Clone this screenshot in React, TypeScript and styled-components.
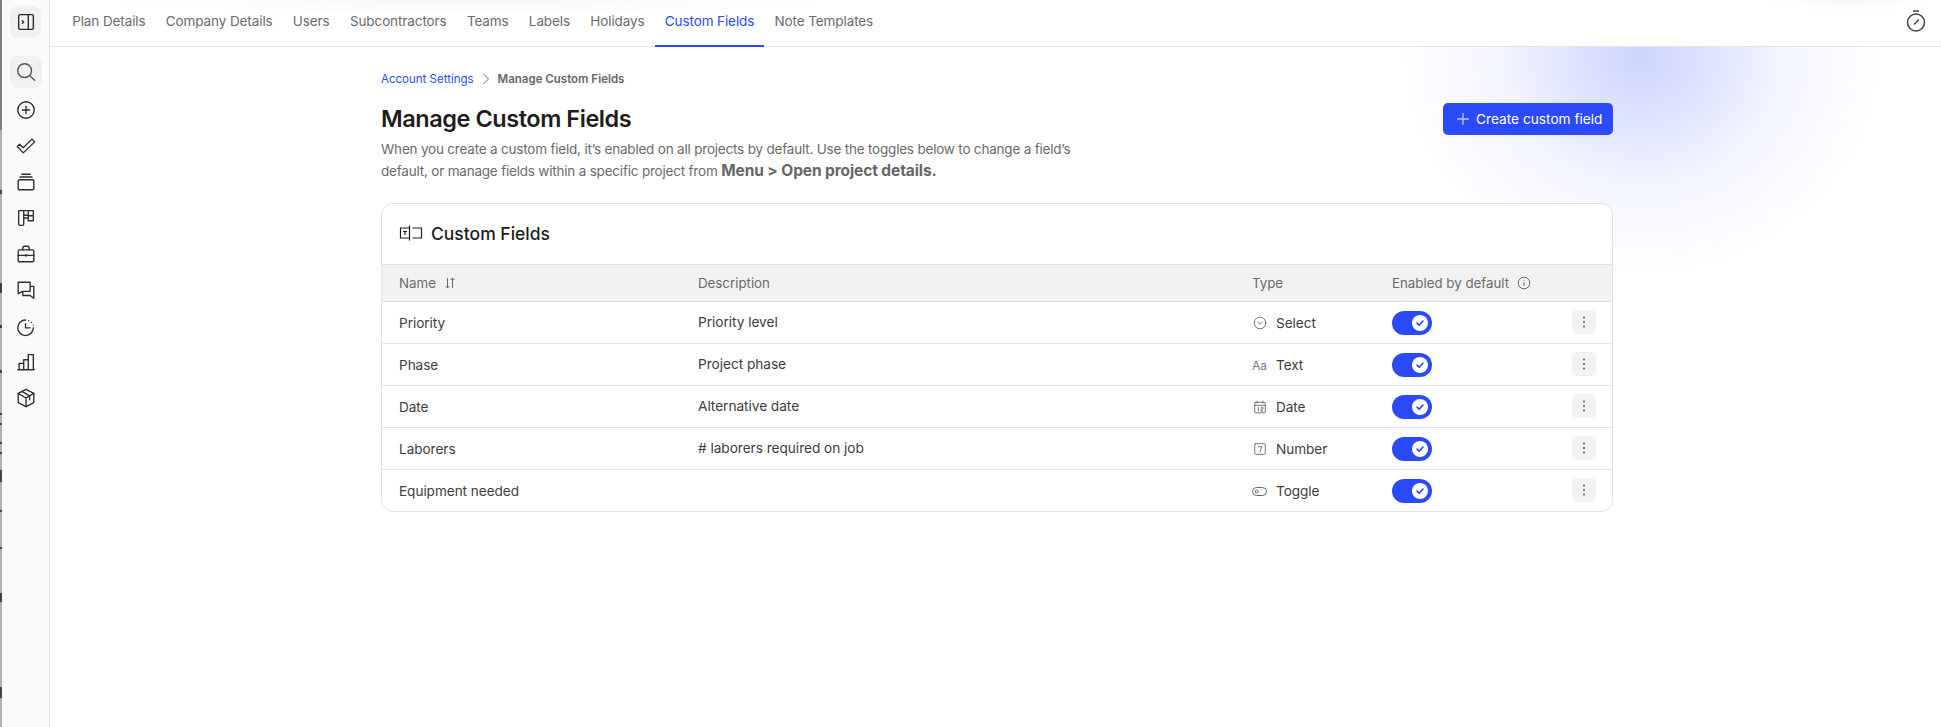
import styled, { createGlobalStyle } from "styled-components";
import { ReactNode } from "react";

const blue = "#2b4bfb";

const GlobalStyle = createGlobalStyle`
  html, body {
    margin: 0;
    height: 100%;
    background: #fff;
    font-family: Inter, "Noto Sans", "Liberation Sans", sans-serif;
  }
  #root { height: 100%; }
`;

const tabs = ["Plan Details", "Company Details", "Users", "Subcontractors", "Teams", "Labels", "Holidays", "Custom Fields", "Note Templates"];

// bits of the window behind that show along the left edge
const stripMarks: [number, number][] = [
  [190, 194], [283, 293], [325, 328], [370, 373], [413, 415], [423, 425], [442, 444], [452, 454],
  [470, 482], [510, 512], [547, 549], [593, 602], [687, 698],
];
const stripStops = stripMarks
  .map(([a, b]) => `#b0b0b0 ${a}px, #3a4450 ${a}px, #3a4450 ${b}px, #b0b0b0 ${b}px`)
  .join(", ");

const Icon = ({ size = 22, children }: { size?: number; children: ReactNode }) => (
  <svg width={size} height={size} viewBox="0 0 24 24" fill="none" stroke="currentColor" strokeWidth="1.5" strokeLinecap="round" strokeLinejoin="round">
    {children}
  </svg>
);

const navIcons: ReactNode[] = [
  <>
    <circle cx="10.5" cy="10.5" r="7.5" />
    <path d="M16 16l5.5 5" />
  </>,
  <>
    <circle cx="12" cy="12" r="9" />
    <path d="M12 8v8M8 12h8" />
  </>,
  <path d="M2.5 12.5L5 10l4 4 9.5-9.5 3 3L9 19.5z" />,
  <>
    <rect x="3.5" y="9.5" width="17" height="11" rx="1.5" />
    <path d="M5.5 6.5h13M7.5 3.5h9" />
  </>,
  <path d="M4 4h5.5v14.5a1.5 1.5 0 0 1-1.5 1.5H5.5A1.5 1.5 0 0 1 4 18.5zM9.5 12h5M14.5 4h5.5v11h-5.5zM9.5 4h5v5h-5zM14.5 9.5H20" />,
  <>
    <rect x="3.5" y="7.5" width="17" height="13" rx="1.5" />
    <path d="M8.5 7.5V5.5a2 2 0 0 1 2-2h3a2 2 0 0 1 2 2v2M3.5 13.5h17M12 12.5v2" />
  </>,
  <path d="M3.5 3.5h13v10H8l-4.5 2.5zM16.5 8h4v13l-4-3H8.5v-4.5" />,
  <>
    <path d="M20 14a8.5 8.5 0 1 1-8.5-8.5" />
    <path d="M11.5 9.5v4.5h5M15 6.2v0M18 8.2v0M19.7 11v0" />
  </>,
  <path d="M3 20.5h18M4.5 20.5v-7h5v7M9.5 20.5V9.5h5v11M14.5 20.5V4h5.5v16.5" />,
  <>
    <path d="M12 2.5l8.5 4.5v10L12 21.5 3.5 17V7z" />
    <path d="M3.5 7l8.5 5 8.5-5M12 12v9.5M7.5 4.8l8.5 4.8v4" />
  </>,
];

const rows = [
  { name: "Priority", description: "Priority level", type: "Select" },
  { name: "Phase", description: "Project phase", type: "Text" },
  { name: "Date", description: "Alternative date", type: "Date" },
  { name: "Laborers", description: "# laborers required on job", type: "Number" },
  { name: "Equipment needed", description: "", type: "Toggle" },
];

const TypeIcon = ({ type }: { type: string }) => {
  if (type === "Select")
    return (
      <Icon size={14}>
        <circle cx="12" cy="12" r="10" />
        <path d="M8 10.5l4 4 4-4" />
      </Icon>
    );
  if (type === "Text") return <AaGlyph>Aa</AaGlyph>;
  if (type === "Date")
    return (
      <Icon size={14}>
        <rect x="3" y="4" width="18" height="18" rx="1" />
        <path d="M3 9h18M7 2v3M17 2v3M9 12.5v6.5M14 12.5h3v3h-3v3.5h3" />
      </Icon>
    );
  if (type === "Number")
    return (
      <Icon size={14}>
        <rect x="3" y="3" width="18" height="18" rx="1" />
        <path d="M9 8h6l-3 9" />
      </Icon>
    );
  return (
    <svg width="15" height="9" viewBox="0 0 15 9" fill="none" stroke="currentColor" strokeWidth="1">
      <rect x="0.5" y="0.5" width="14" height="8" rx="4" />
      <rect x="3.5" y="3" width="2.5" height="3" rx="0.8" />
    </svg>
  );
};

export default () => {
  return (
    <>
      <GlobalStyle />
      <Page>
        <Strip />
        <Side>
          <SideButton>
            <Icon size={22}>
              <rect x="4" y="4" width="16" height="16" rx="1.5" />
              <path d="M14.5 4v16M8 10.5l1.5 1.5L8 13.5" />
            </Icon>
          </SideButton>
          <Nav>
            {navIcons.map((icon, i) => (
              <NavItem key={i} $active={i === 0}>
                <Icon size={22}>{icon}</Icon>
              </NavItem>
            ))}
          </Nav>
        </Side>
        <Right>
          <TopBar>
            <Tabs>
              {tabs.map((tab) => (
                <Tab key={tab} $active={tab === "Custom Fields"}>
                  {tab}
                </Tab>
              ))}
            </Tabs>
            <Timer>
              <Icon size={24}>
                <circle cx="12" cy="13.5" r="8.5" />
                <path d="M9.5 2h5M10.5 15l4-4" />
              </Icon>
            </Timer>
          </TopBar>
          <Body>
            <Glow />
            <Content>
              <Crumbs>
                <CrumbLink>Account Settings</CrumbLink>
                <svg width="10" height="12" viewBox="0 0 10 12" fill="none" stroke="#6b6b6b" strokeWidth="1">
                  <path d="M2.5 1l5 5-5 5" />
                </svg>
                <CrumbCurrent>Manage Custom Fields</CrumbCurrent>
              </Crumbs>
              <Head>
                <div>
                  <Title>Manage Custom Fields</Title>
                  <Intro>
                    When you create a custom field, it’s enabled on all projects by default. Use the toggles below to change a field’s default, or manage fields within a specific project from <strong>Menu &gt; Open project details.</strong>
                  </Intro>
                </div>
                <CreateButton>
                  <svg width="14" height="14" viewBox="0 0 14 14" stroke="#b9c5ff" strokeWidth="1.3">
                    <path d="M7 1v12M1 7h12" />
                  </svg>
                  Create custom field
                </CreateButton>
              </Head>
              <Card>
                <CardHead>
                  <svg width="24" height="16" viewBox="0 0 24 16" fill="none" stroke="#1d1d1d" strokeWidth="1.2">
                    <path d="M10.5 3H1.5v10h9M10.5 0.5v15M13.5 3h9v10h-9" />
                    <path d="M4 6.5h4M6 6.5v3.5" />
                  </svg>
                  <CardTitle>Custom Fields</CardTitle>
                </CardHead>
                <HeadRow>
                  <HeadCell>
                    Name
                    <svg width="12" height="12" viewBox="0 0 12 12" fill="none" stroke="#6b6b6b" strokeWidth="1">
                      <path d="M3.5 1v10M1.5 9l2 2 2-2M8.5 11V1M6.5 3l2-2 2 2" />
                    </svg>
                  </HeadCell>
                  <HeadCell>Description</HeadCell>
                  <HeadCell>Type</HeadCell>
                  <HeadCell>
                    Enabled by default
                    <svg width="14" height="14" viewBox="0 0 14 14" fill="none" stroke="#6b6b6b" strokeWidth="1">
                      <circle cx="7" cy="7" r="5.8" />
                      <path d="M7 6.2v3.6M7 4v.6" />
                    </svg>
                  </HeadCell>
                </HeadRow>
                {rows.map((row) => (
                  <Row key={row.name}>
                    <Cell>{row.name}</Cell>
                    <Description>{row.description}</Description>
                    <TypeCell>
                      <TypeGlyph>
                        <TypeIcon type={row.type} />
                      </TypeGlyph>
                      {row.type}
                    </TypeCell>
                    <Switch>
                      <Knob>
                        <svg width="10" height="10" viewBox="0 0 10 10" fill="none" stroke={blue} strokeWidth="1.6" strokeLinecap="round" strokeLinejoin="round">
                          <path d="M2 5.2l2.2 2L8 3" />
                        </svg>
                      </Knob>
                    </Switch>
                    <MoreButton>
                      <svg width="4" height="12" viewBox="0 0 4 12" fill="#555">
                        <circle cx="2" cy="1.5" r="1" />
                        <circle cx="2" cy="6" r="1" />
                        <circle cx="2" cy="10.5" r="1" />
                      </svg>
                    </MoreButton>
                  </Row>
                ))}
              </Card>
            </Content>
          </Body>
        </Right>
      </Page>
    </>
  );
};

const Page = styled.div`
  display: flex;
  height: 727px;
  overflow: hidden;
`;
const Strip = styled.div`
  width: 2px;
  flex-shrink: 0;
  background: linear-gradient(to bottom, #808080 0, #808080 130px, #b0b0b0 130px, ${stripStops}, #b0b0b0 727px);
`;
const Side = styled.aside`
  width: 48px;
  flex-shrink: 0;
  box-sizing: border-box;
  padding: 6px 0 0 8px;
  background: #fafafa;
  border-right: 1px solid #e4e4e4;
`;
const SideButton = styled.div`
  width: 31px;
  height: 32px;
  border-radius: 8px;
  background: #f1f1f1;
  color: #2a2a2a;
  display: flex;
  align-items: center;
  justify-content: center;
`;
const Nav = styled.nav`
  display: flex;
  flex-direction: column;
  margin-top: 18px;
  gap: 4px;
`;
const NavItem = styled.div<{ $active?: boolean }>`
  width: 32px;
  height: 32px;
  border-radius: 8px;
  margin-bottom: ${(p) => (p.$active ? "2px" : "0")};
  display: flex;
  align-items: center;
  justify-content: center;
  color: ${(p) => (p.$active ? "#555" : "#2f2f2f")};
  background: ${(p) => (p.$active ? "#f1f1f1" : "transparent")};
`;
const Right = styled.div`
  flex: 1;
  display: flex;
  flex-direction: column;
  min-width: 0;
`;
const TopBar = styled.header`
  height: 47px;
  box-sizing: border-box;
  flex-shrink: 0;
  display: flex;
  justify-content: space-between;
  border-bottom: 1px solid #e4e4e4;
  padding: 0 13px 0 12px;
  background:
    radial-gradient(ellipse 380px 14px at 420px 0, rgba(0, 0, 0, 0.035), rgba(0, 0, 0, 0)),
    radial-gradient(ellipse 90px 12px at 1800px 0, rgba(0, 0, 0, 0.03), rgba(0, 0, 0, 0));
`;
const Tabs = styled.div`
  display: flex;
`;
const Tab = styled.div<{ $active?: boolean }>`
  padding: 0 10.15px 3px;
  height: 47px;
  box-sizing: border-box;
  display: flex;
  align-items: center;
  font-size: 13.5px;
  letter-spacing: -0.1px;
  color: ${(p) => (p.$active ? blue : "#6b6b6b")};
  border-bottom: 2px solid ${(p) => (p.$active ? blue : "transparent")};
`;
const Timer = styled.div`
  display: flex;
  align-items: center;
  padding-bottom: 5px;
  color: #444;
`;
const Body = styled.main`
  flex: 1;
  position: relative;
  overflow: hidden;
`;
const Glow = styled.div`
  position: absolute;
  left: 1351px;
  top: -210px;
  width: 480px;
  height: 440px;
  background: radial-gradient(closest-side, rgba(43, 75, 251, 0.23), rgba(43, 75, 251, 0.15) 30%, rgba(43, 75, 251, 0.06) 58%, rgba(43, 75, 251, 0) 100%);
`;
const Content = styled.div`
  position: relative;
  width: 1232px;
  margin-left: 331px;
  padding-top: 25px;
`;
const Crumbs = styled.div`
  display: flex;
  align-items: center;
  gap: 7px;
  height: 14px;
`;
const CrumbLink = styled.span`
  font-size: 11.5px;
  color: ${blue};
`;
const CrumbCurrent = styled.span`
  font-size: 11.5px;
  font-weight: 600;
  color: #666;
`;
const Head = styled.div`
  display: flex;
  justify-content: space-between;
  align-items: flex-start;
  margin-top: 16px;
`;
const Title = styled.h1`
  margin: 0;
  font-size: 23.5px;
  line-height: 34px;
  font-weight: 600;
  letter-spacing: -0.45px;
  color: #1d1d1d;
`;
const Intro = styled.p`
  margin: 2px 0 0;
  width: 695px;
  font-size: 13.5px;
  line-height: 22px;
  letter-spacing: -0.2px;
  color: #6b6b6b;

  strong {
    font-size: 15.5px;
    line-height: 1;
    font-weight: 700;
    letter-spacing: -0.1px;
    color: #666;
  }
`;
const CreateButton = styled.button`
  width: 170px;
  height: 32px;
  margin-top: 1px;
  border: none;
  border-radius: 5px;
  background: ${blue};
  color: #fff;
  font: inherit;
  font-size: 13.7px;
  display: flex;
  align-items: center;
  padding: 0 0 0 13px;
  gap: 6px;
`;
const Card = styled.section`
  margin-top: 21px;
  border: 1px solid #e2e2e2;
  border-radius: 12px;
  overflow: hidden;
  background: #fff;
`;
const CardHead = styled.div`
  height: 60px;
  display: flex;
  align-items: center;
  gap: 8px;
  padding: 0 0 2px 17px;
  box-sizing: border-box;
`;
const CardTitle = styled.h2`
  margin: 0;
  font-size: 17.5px;
  font-weight: 500;
  color: #1d1d1d;
`;
const columns = "299px 554px 140px 1fr 40px";
const HeadRow = styled.div`
  display: grid;
  grid-template-columns: ${columns};
  align-items: center;
  height: 38px;
  box-sizing: border-box;
  padding-left: 17px;
  background: #f2f2f2;
  border-top: 1px solid #e2e2e2;
  border-bottom: 1px solid #e2e2e2;
  color: #6b6b6b;
`;
const HeadCell = styled.div`
  display: flex;
  align-items: center;
  gap: 8px;
  font-size: 13.3px;
`;
const Row = styled.div`
  display: grid;
  grid-template-columns: ${columns};
  align-items: center;
  height: 42px;
  box-sizing: border-box;
  padding-left: 17px;
  border-bottom: 1px solid #e2e2e2;

  &:last-child {
    height: 41px;
    border-bottom: none;
  }
`;
const Cell = styled.div`
  display: flex;
  align-items: center;
  gap: 8px;
  padding-top: 1px;
  font-size: 13.6px;
  letter-spacing: -0.05px;
  color: #3d3d3d;
`;
const Description = styled.div`
  font-size: 13.7px;
  letter-spacing: -0.05px;
  color: #3d3d3d;
  margin-top: -2px;
`;
const TypeCell = styled(Cell)`
  gap: 9px;
`;
const TypeGlyph = styled.span`
  width: 15px;
  display: flex;
  justify-content: center;
  color: #666;
`;
const AaGlyph = styled.span`
  font-size: 12px;
  color: #777;
`;
const Switch = styled.div`
  width: 40px;
  height: 24px;
  border-radius: 12px;
  background: ${blue};
  display: flex;
  align-items: center;
  justify-content: flex-end;
  padding-right: 4px;
  box-sizing: border-box;
`;
const Knob = styled.div`
  width: 16px;
  height: 16px;
  border-radius: 50%;
  background: #fff;
  display: flex;
  align-items: center;
  justify-content: center;
`;
const MoreButton = styled.div`
  width: 24px;
  height: 24px;
  margin-top: -1px;
  border-radius: 5px;
  background: #f2f2f2;
  display: flex;
  align-items: center;
  justify-content: center;
`;
